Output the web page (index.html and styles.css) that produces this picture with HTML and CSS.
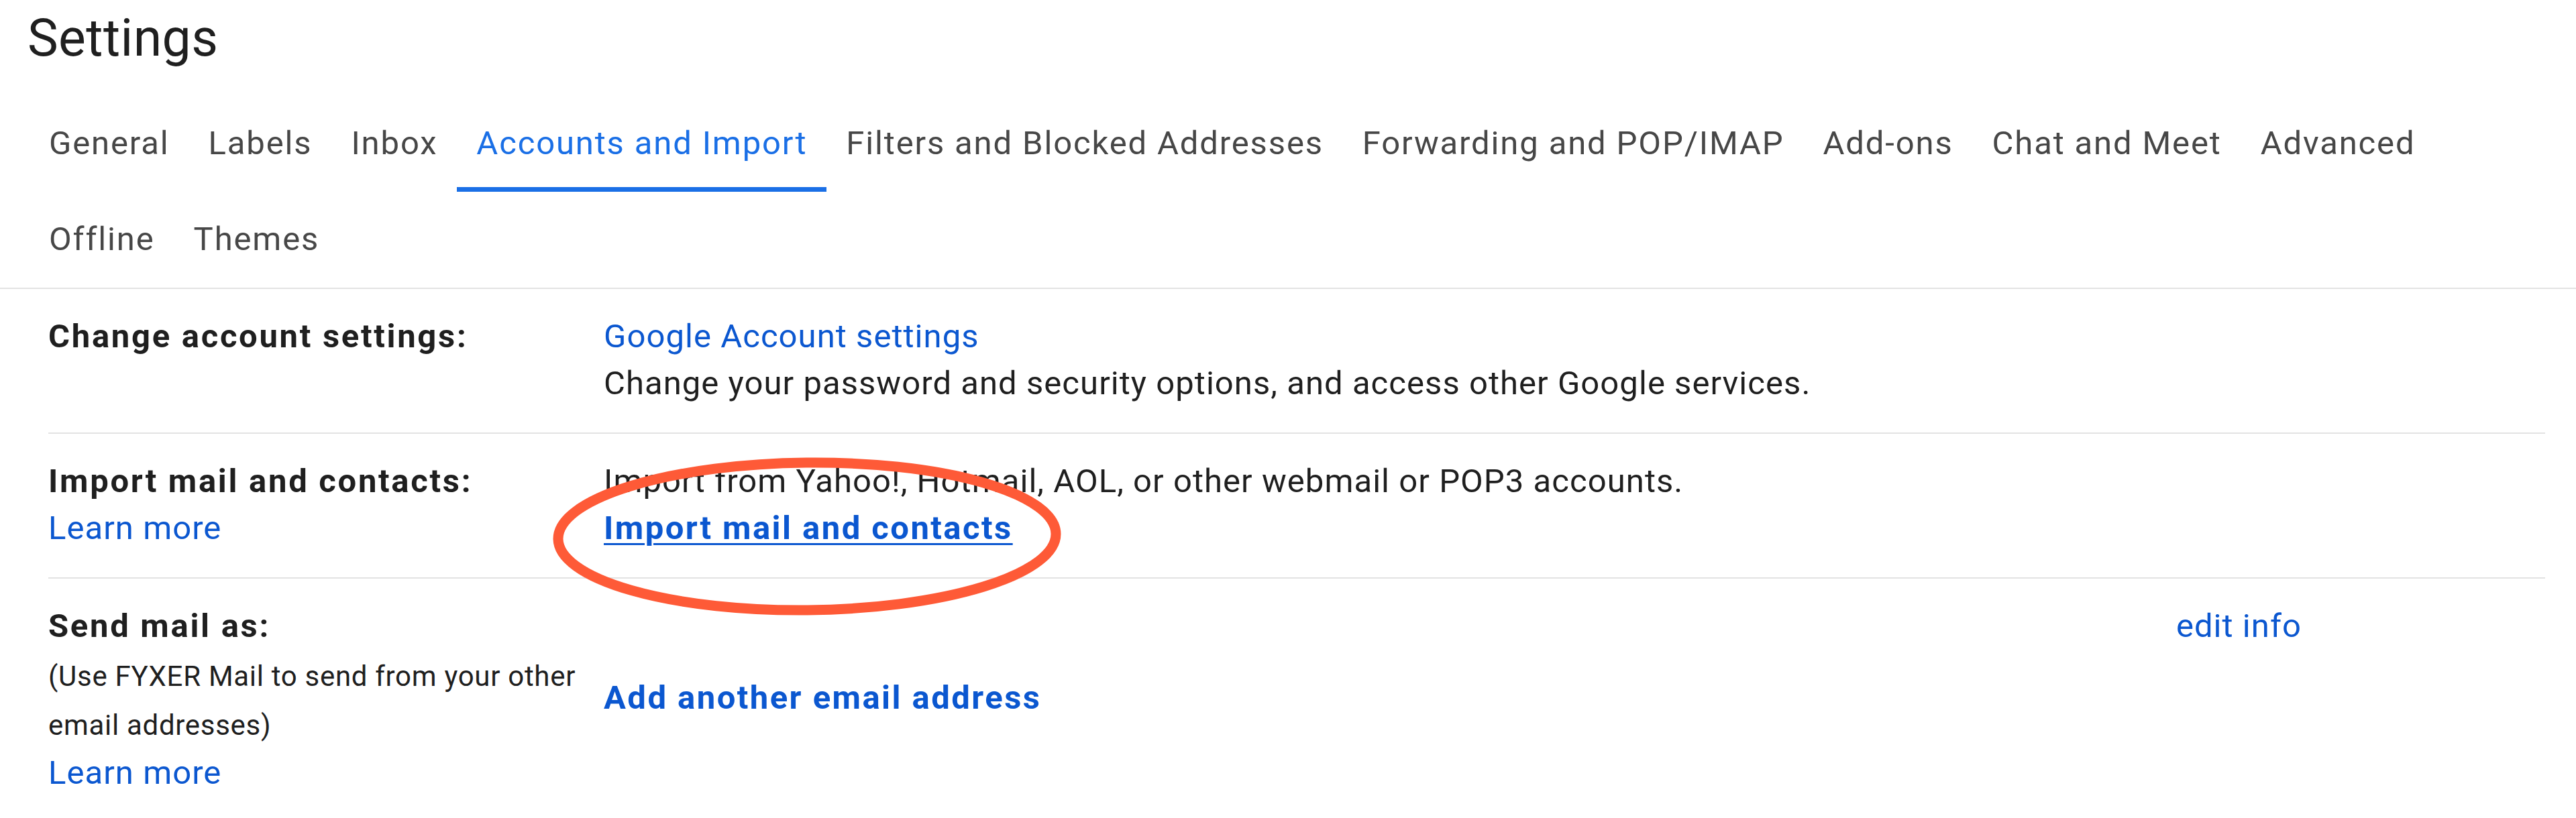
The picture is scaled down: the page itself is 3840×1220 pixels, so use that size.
FILE: index.html
```html
<!DOCTYPE html>
<html lang="en">
<head>
<meta charset="utf-8">
<title>Settings</title>
<link rel="stylesheet" href="styles.css">
</head>
<body>
<div class="page">
  <h1 class="title">Settings</h1>
  <nav class="tabs-wrap">
    <div class="tabs">
      <a class="tab">General</a>
      <a class="tab">Labels</a>
      <a class="tab">Inbox</a>
      <a class="tab active">Accounts and Import</a>
      <a class="tab">Filters and Blocked Addresses</a>
      <a class="tab">Forwarding and POP/IMAP</a>
      <a class="tab">Add-ons</a>
      <a class="tab">Chat and Meet</a>
      <a class="tab">Advanced</a>
      <a class="tab">Offline</a>
      <a class="tab">Themes</a>
    </div>
  </nav>

  <div class="table">
    <div class="row">
      <div class="label"><span class="strong">Change account settings:</span></div>
      <div class="value">
        <a class="link">Google Account settings</a>
        <div>Change your password and security options, and access other Google services.</div>
      </div>
    </div>

    <div class="row">
      <div class="label">
        <span class="strong">Import mail and contacts:</span>
        <a class="link">Learn more</a>
      </div>
      <div class="value">
        <div>Import from Yahoo!, Hotmail, AOL, or other webmail or POP3 accounts.</div>
        <a class="link bold underline">Import mail and contacts</a>
      </div>
    </div>

    <div class="row last">
      <div class="label">
        <span class="strong">Send mail as:</span>
        <span class="note">(Use FYXER Mail to send from your other email addresses)</span>
        <a class="link">Learn more</a>
      </div>
      <div class="value">
        <div class="address-line"><a class="link">edit info</a></div>
        <a class="link bold add">Add another email address</a>
      </div>
    </div>
  </div>

  <svg class="annot" width="770" height="250" viewBox="0 0 770 250" aria-hidden="true">
    <ellipse cx="385" cy="125" rx="371" ry="110" fill="none" stroke="#fe5a37" stroke-width="15" transform="rotate(-0.6 385 125)"/>
  </svg>
</div>
</body>
</html>
```

FILE: styles.css
```css
* { box-sizing: border-box; }

html, body {
  margin: 0;
  padding: 0;
  background: #ffffff;
}

body {
  font-family: Roboto, "Open Sans", Arial, sans-serif;
  color: #1f1f1f;
  width: 3840px;
  height: 1220px;
  overflow: hidden;
}

.page {
  position: relative;
  width: 3840px;
  height: 1220px;
}

.title {
  margin: 0;
  height: 143px;
  padding: 12px 0 0 41px;
  font-size: 77px;
  line-height: 90px;
  font-weight: 400;
  letter-spacing: 0.4px;
  color: #1f1f1f;
}

.tabs-wrap {
  border-bottom: 2px solid #e3e3e3;
}

.tabs {
  display: flex;
  flex-wrap: wrap;
  padding: 0 44px;
}

.tab {
  display: block;
  height: 143px;
  line-height: 141px;
  padding: 0 29px;
  font-size: 49px;
  letter-spacing: 1.85px;
  color: #474747;
  white-space: nowrap;
}

.tab.active {
  color: #1a6fe6;
  box-shadow: inset 0 -7px 0 #1a6fe6;
}

.table {
  margin: 0 46px 0 72px;
}

.row {
  display: grid;
  grid-template-columns: 828px 1fr;
  padding: 36px 0 38px;
  border-bottom: 2px solid #e3e3e3;
  font-size: 49px;
  line-height: 70px;
  letter-spacing: 1.05px;
}

.row.last {
  border-bottom: none;
}

.label,
.value {
  display: flex;
  flex-direction: column;
  align-items: flex-start;
}

.strong {
  font-weight: 700;
  color: #1f1f1f;
  letter-spacing: 2.7px;
}

.note {
  font-size: 42px;
  line-height: 73px;
  margin-top: 3px;
  padding-right: 20px;
  letter-spacing: 0.7px;
}

.link {
  color: #0b57d0;
  text-decoration: none;
}

.link.bold {
  font-weight: 700;
  letter-spacing: 2.45px;
}

.link.underline {
  text-decoration: underline;
  text-decoration-thickness: 3px;
  text-underline-offset: 6px;
}

.address-line {
  align-self: stretch;
  display: flex;
  justify-content: flex-end;
  padding-right: 363px;
}

.add {
  margin-top: 37px;
}

.annot {
  position: absolute;
  left: 818px;
  top: 675px;
}
```
